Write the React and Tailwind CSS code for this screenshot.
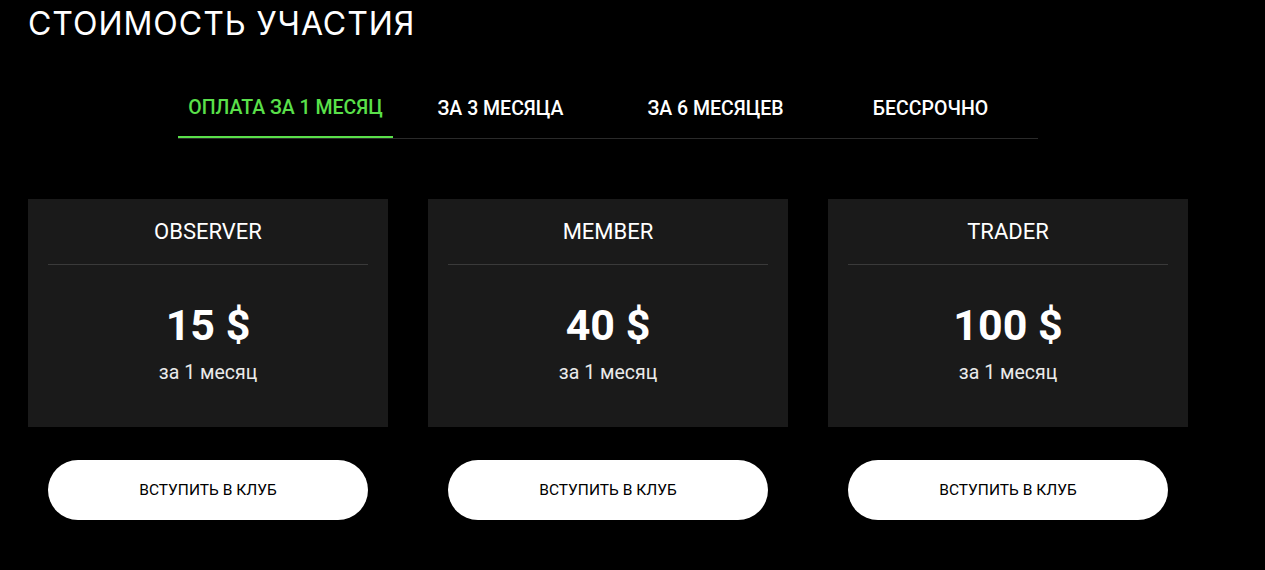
export default function App() {
  const tabs = ["ОПЛАТА ЗА 1 МЕСЯЦ", "ЗА 3 МЕСЯЦА", "ЗА 6 МЕСЯЦЕВ", "БЕССРОЧНО"];
  const plans = [
    { name: "OBSERVER", price: "15 $" },
    { name: "MEMBER", price: "40 $" },
    { name: "TRADER", price: "100 $" },
  ];
  return (
    <div className="min-h-[570px] w-full bg-black px-[28px] text-white" style={{ fontFamily: "Roboto, 'Noto Sans', sans-serif" }}>
      <div className="w-[1160px]">
        <h1 className="pt-[4px] text-[32px] leading-[40px] font-normal tracking-[0.03em] text-white" style={{ fontFamily: "Inter, Roboto, sans-serif" }}>
          СТОИМОСТЬ УЧАСТИЯ
        </h1>
        <div className="mx-auto mt-[32px] flex w-[860px] border-b border-[#2a2a2a]">
          {tabs.map((t, i) => (
            <div
              key={t}
              className={`flex h-[62px] w-[215px] items-center justify-center pt-[3px] text-[19.5px] font-medium ${
                i === 0 ? "border-b-2 border-[#5ae04a] text-[#5ae04a] -mb-px" : "text-white"
              }`}
            >
              {t}
            </div>
          ))}
        </div>
        <div className="mt-[60px] flex gap-[40px]">
          {plans.map((p) => (
            <div key={p.name} className="flex w-[360px] flex-col">
              <div className="flex h-[228px] flex-col items-center bg-[#1a1a1a] px-[20px] pt-[20px]">
                <div className="h-[26px] text-[22px] leading-[26px]">{p.name}</div>
                <div className="mt-[19px] h-px w-full bg-[#3a3a3a]" />
                <div className="mt-[36px] text-[43px] leading-[48px] font-bold">{p.price}</div>
                <div className="mt-[11px] text-[19.5px] leading-[26px] text-[#eaeaea]">за 1 месяц</div>
              </div>
              <button className="mx-[20px] mt-[33px] flex h-[60px] items-center justify-center rounded-full bg-white pt-[2px] text-[15.5px] text-black">
                ВСТУПИТЬ В КЛУБ
              </button>
            </div>
          ))}
        </div>
      </div>
    </div>
  );
}
